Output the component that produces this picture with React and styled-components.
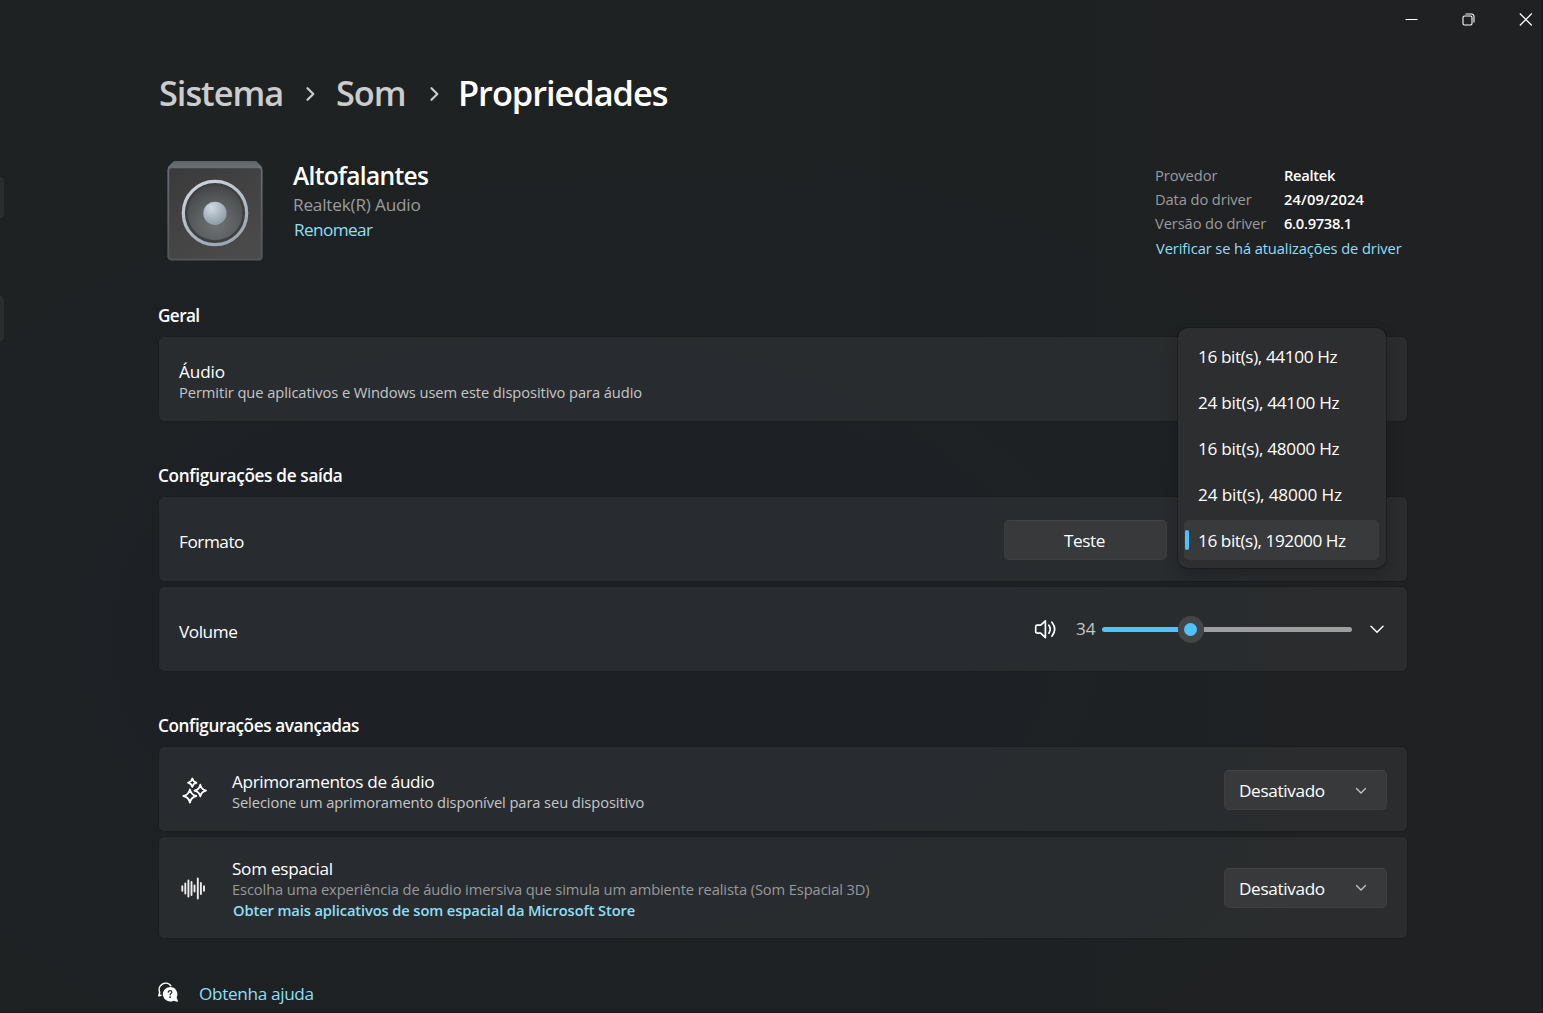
import React from 'react';
import styled, { createGlobalStyle, css } from 'styled-components';

const GlobalStyle = createGlobalStyle`
  * {
    box-sizing: border-box;
  }

  body {
    margin: 0;
    background: #1f2122;
    color: #fff;
    font-family: 'Open Sans', 'Noto Sans', sans-serif;
    overflow: hidden;
  }

  h1, h2, p, dl, dt, dd {
    margin: 0;
    font-weight: inherit;
    font-size: inherit;
  }
`;

const Window = styled.div`
  display: flex;
  width: 1543px;
  height: 1013px;
  overflow: hidden;
  background:
    radial-gradient(ellipse 900px 560px at 560px 640px, #1d2125 0%, #1d2125 45%, rgba(30, 33, 34, 0) 100%),
    linear-gradient(90deg, #1f2222 0%, #1e2122 70%, #202122 84%, #202122 100%);
  border-right: 1px solid #151617;
  border-bottom: 1px solid #151617;
`;

const Rail = styled.div`
  display: flex;
  flex-direction: column;
  gap: 78px;
  width: 4px;
  padding-top: 177px;
  flex: none;
`;

const RailItem = styled.div`
  height: ${({ $height }) => $height}px;
  border-radius: 0 5px 5px 0;
  background: #2a2d2e;
`;

const Main = styled.main`
  display: flex;
  flex-direction: column;
  flex: 1;
`;

const TitleBar = styled.header`
  display: flex;
  justify-content: flex-end;
  height: 39px;
  margin-right: -12px;
`;

const CaptionButton = styled.button`
  display: flex;
  align-items: center;
  justify-content: center;
  width: 57px;
  height: 39px;
  padding: 0;
  border: 0;
  background: none;
  color: #fff;
`;

const Content = styled.div`
  width: 1248px;
  margin-left: 155px;
`;

const Breadcrumb = styled.nav`
  display: flex;
  align-items: center;
  height: 48px;
  margin-top: 31px;
  font-size: 34.4px;
  font-weight: 600;
  line-height: 48px;
`;

const Crumb = styled.span`
  width: ${({ $width }) => $width}px;
  margin-top: -2px;
  margin-left: ${({ $current }) => ($current ? '-2px' : 0)};
  color: ${({ $current }) => ($current ? '#fff' : '#cbcccc')};
  letter-spacing: -1.05px;
  white-space: nowrap;
`;

const CrumbArrow = styled.svg`
  width: 10px;
  height: 16px;
  margin: 0 21px 0 22px;
  flex: none;
`;

const Device = styled.section`
  display: flex;
  height: 102px;
  margin-top: 42px;
`;

const DeviceArt = styled.svg`
  width: 98px;
  height: 102px;
  margin-left: 7px;
  flex: none;
`;

const DeviceText = styled.div`
  flex: 1;
  margin-left: 29px;
`;

const DeviceName = styled.h1`
  font-size: 24.5px;
  font-weight: 600;
  line-height: 32px;
  letter-spacing: -0.65px;
`;

const DeviceModel = styled.p`
  margin-top: 1px;
  color: #9b9c9d;
  font-size: 17.2px;
  line-height: 24px;
  letter-spacing: -0.2px;
`;

const Link = styled.a`
  color: #8fdff5;
  font-size: ${({ $size }) => $size || 17.2}px;
  font-weight: ${({ $strong }) => ($strong ? 600 : 400)};
  letter-spacing: ${({ $spacing }) => $spacing || 0}px;
  white-space: nowrap;
`;

const RenameRow = styled.div`
  padding-left: 1px;
  line-height: 25px;
`;

const DriverInfo = styled.div`
  width: 252px;
  padding-top: 3px;
`;

const DriverGrid = styled.dl`
  display: grid;
  grid-template-columns: 129px 1fr;
  font-size: 14.7px;
  line-height: 24px;
`;

const DriverLabel = styled.dt`
  color: #9b9c9d;
  letter-spacing: -0.1px;
`;

const DriverValue = styled.dd`
  font-weight: 600;
  letter-spacing: ${({ $spacing }) => $spacing}px;
`;

const DriverLink = styled.div`
  margin-top: 1px;
  padding-left: 1px;
  line-height: 25px;
`;

const Section = styled.section`
  margin-top: 42px;

  & + & {
    margin-top: 43px;
  }
`;

const SectionTitle = styled.h2`
  height: 33px;
  margin-left: -1px;
  font-size: 17.2px;
  font-weight: 600;
  line-height: 24px;
  letter-spacing: ${({ $spacing }) => $spacing}px;
`;

const Card = styled.div`
  display: flex;
  align-items: center;
  height: ${({ $tall }) => ($tall ? 101 : 84)}px;
  padding: ${({ $tall }) => ($tall ? 0 : '2px')} 20px 0;
  border-radius: 5px;
  background: rgba(255, 255, 255, 0.05);
  box-shadow: 0 0 0 1px rgba(0, 0, 0, 0.12);

  & + & {
    margin-top: 6px;
  }
`;

const CardIcon = styled.svg`
  width: 28px;
  height: 28px;
  margin-left: 1px;
  margin-right: 24px;
  flex: none;
`;

const CardText = styled.div`
  display: flex;
  flex-direction: column;
  flex: 1;
  padding-top: ${({ $single }) => ($single ? 2 : 4)}px;
`;

const CardTitle = styled.span`
  font-size: 17.2px;
  line-height: 21px;
  letter-spacing: ${({ $spacing }) => $spacing || 0}px;
`;

const CardHint = styled.span`
  color: ${({ $dim }) => ($dim ? '#97999a' : '#c5c6c7')};
  font-size: 14.7px;
  line-height: 21px;
  letter-spacing: ${({ $spacing }) => $spacing || 0}px;
`;

const CardLink = styled.div`
  padding-left: 1px;
  line-height: 21px;
`;

const control = css`
  height: 40px;
  border: 1px solid #3c3e3f;
  border-top-color: #424445;
  border-radius: 5px;
  background: #37393a;
  color: #fff;
  font-family: inherit;
  font-size: 17.2px;
`;

const Button = styled.button`
  ${control}
  width: 163px;
  padding: 0 2px 0 0;
  letter-spacing: -0.4px;
`;

const Select = styled.button`
  ${control}
  display: flex;
  align-items: center;
  justify-content: space-between;
  width: 163px;
  padding: 1px 19px 0 14px;
  letter-spacing: -0.35px;
`;

const FormatAnchor = styled.div`
  position: relative;
  width: 208px;
  height: 40px;
  margin-left: 12px;
`;

const FormatMenu = styled.ul`
  position: absolute;
  left: -1px;
  bottom: -8px;
  z-index: 2;
  display: flex;
  flex-direction: column;
  gap: 6px;
  width: 208px;
  height: 240px;
  margin: 0;
  padding: 8px 7px 6px 6px;
  list-style: none;
  border-radius: 10px;
  background: #2d2e2f;
  box-shadow: 0 0 0 1px rgba(0, 0, 0, 0.18), 0 8px 16px rgba(0, 0, 0, 0.22);
`;

const FormatOption = styled.li`
  display: flex;
  align-items: center;
  height: 40px;
  padding-left: 1px;
  border-radius: 5px;
  background: ${({ $selected }) => ($selected ? '#393a3b' : 'transparent')};
  font-size: 17.2px;
  letter-spacing: ${({ $spacing }) => $spacing}px;
  white-space: nowrap;

  &::before {
    content: '';
    width: 4px;
    height: 20px;
    margin-right: 9px;
    border-radius: 2px;
    background: ${({ $selected }) => ($selected ? '#4cc2ff' : 'transparent')};
  }
`;

const VolumeControl = styled.div`
  display: flex;
  align-items: center;
  padding-bottom: 2px;
`;

const VolumeIcon = styled.svg`
  width: 24px;
  height: 24px;
`;

const VolumeValue = styled.span`
  width: 26px;
  margin-left: 19px;
  color: #c5c6c7;
  font-size: 17.2px;
  line-height: 24px;
`;

const Track = styled.div`
  display: flex;
  align-items: center;
  width: 250px;
  height: 27px;
`;

const TrackBar = styled.div`
  flex: ${({ $filled }) => ($filled ? '0 0 76px' : '1')};
  height: 5px;
  border-radius: ${({ $filled }) => ($filled ? '3px 0 0 3px' : '0 3px 3px 0')};
  background: ${({ $filled }) => ($filled ? '#4cc2ff' : '#9e9f9f')};
`;

const Thumb = styled.div`
  display: flex;
  align-items: center;
  justify-content: center;
  width: 26px;
  height: 27px;
  padding-right: 1px;
  border-radius: 50%;
  background: #454545;

  &::before {
    content: '';
    width: 13px;
    height: 13px;
    border-radius: 50%;
    background: #4cc2ff;
  }
`;

const Expander = styled.svg`
  width: 16px;
  height: 10px;
  margin: 0 2px 0 17px;
`;

const Help = styled.footer`
  display: flex;
  align-items: center;
  gap: 18px;
  height: 30px;
  margin-top: 40px;
  margin-left: -2px;
`;

const ChevronDown = () => (
  <svg width="12" height="8" viewBox="0 0 12 8" fill="none">
    <path d="M1.500 1.500 6 6l4.500-4.500" stroke="#c4c5c5" strokeWidth="1.300" strokeLinecap="round" />
  </svg>
);

const CrumbSeparator = () => (
  <CrumbArrow viewBox="0 0 10 16" fill="none">
    <path d="M2.500 2.200l5.800 5.800-5.800 5.800" stroke="#cbcccc" strokeWidth="2.200" strokeLinecap="round" strokeLinejoin="round" />
  </CrumbArrow>
);

const SpeakerArt = () => (
  <DeviceArt viewBox="0 0 98 102">
    <defs>
      <linearGradient id="face" x1="0" y1="0" x2="0.600" y2="1">
        <stop offset="0" stopColor="#3a3a3a" />
        <stop offset="1" stopColor="#4a4a4a" />
      </linearGradient>
      <linearGradient id="lid" x1="0" y1="0" x2="0" y2="1">
        <stop offset="0" stopColor="#5c6268" />
        <stop offset="0.600" stopColor="#6b7279" />
        <stop offset="1" stopColor="#50565b" />
      </linearGradient>
      <linearGradient id="edge" x1="0" y1="0" x2="0" y2="1">
        <stop offset="0" stopColor="#656c73" />
        <stop offset="1" stopColor="#54585c" />
      </linearGradient>
      <linearGradient id="ring" x1="0.200" y1="0" x2="0.700" y2="1">
        <stop offset="0" stopColor="#cdd6de" />
        <stop offset="1" stopColor="#9aa5b1" />
      </linearGradient>
      <radialGradient id="cone" cx="0.520" cy="0.700" r="0.700">
        <stop offset="0" stopColor="#6e7275" />
        <stop offset="0.500" stopColor="#5d6062" />
        <stop offset="1" stopColor="#444546" />
      </radialGradient>
      <radialGradient id="dome" cx="0.350" cy="0.250" r="0.850">
        <stop offset="0" stopColor="#cfd9e2" />
        <stop offset="1" stopColor="#8795a3" />
      </radialGradient>
    </defs>
    <path d="M2 7 7 1.700Q8 1 9 1h80q1 0 2 .700L96 7v5H2z" fill="url(#lid)" />
    <rect x="2.300" y="7.300" width="93.400" height="92.300" rx="3" fill="url(#face)" stroke="url(#edge)" strokeWidth="1.800" />
    <circle cx="49" cy="53" r="30" fill="#3d4043" />
    <circle cx="49" cy="53" r="31.700" fill="none" stroke="url(#ring)" strokeWidth="3.200" />
    <circle cx="49" cy="52.700" r="27.500" fill="url(#cone)" />
    <circle cx="49" cy="53.300" r="11.600" fill="url(#dome)" />
  </DeviceArt>
);

const SparkleIcon = () => (
  <CardIcon viewBox="0 0 28 28" fill="none" stroke="#fff" strokeWidth="1.800" strokeLinejoin="round">
    <path d="M12.300 2.500 13.700 5.300 16.500 6.700 13.700 8.100 12.300 10.900 10.900 8.100 8.100 6.700 10.900 5.300z" />
    <path d="M20.300 8.700Q21.200 13.600 26 14.600 21.200 15.600 20.300 20.400 19.300 15.600 14.500 14.600 19.300 13.600 20.300 8.700z" />
    <path d="M9.900 13.400Q11 18.900 16.300 20 11 21.100 9.900 26.600 8.800 21.100 3.400 20 8.800 18.900 9.900 13.400z" />
  </CardIcon>
);

const WaveIcon = () => (
  <CardIcon viewBox="0 0 28 28" stroke="#ececec" strokeWidth="1.900" strokeLinecap="round">
    <path d="M2.300 12.200v4.500M5.300 9.500v10M8.400 6.500v16M11.500 8v13M14.500 11.500v6M17.800 4.500v20M20.900 9v11M24 12.200v4.500" />
  </CardIcon>
);

const HelpIcon = () => (
  <svg width="24" height="24" viewBox="0 0 24 24">
    <path
      d="M4 14.200 1.800 14.700 2.700 11.400A6.500 6.500 0 0 1 13.800 4.800"
      fill="none"
      stroke="#fff"
      strokeWidth="1.500"
      strokeLinecap="round"
      strokeLinejoin="round"
    />
    <path d="M13.100 5.900a7.300 7.300 0 0 1 6.500 10.600l1.300 3.500q.300 1-.700.800l-3.700-1.100A7.300 7.300 0 1 1 13.100 5.900z" fill="#fff" />
    <path
      d="M11.300 11.100q.200-1.500 1.800-1.500 1.700 0 1.700 1.500 0 .900-.900 1.500-.800.500-.800 1.300"
      fill="none"
      stroke="#1e2225"
      strokeWidth="1.200"
      strokeLinecap="round"
    />
    <circle cx="13.100" cy="16.200" r="0.850" fill="#1e2225" />
  </svg>
);

const formats = [
  { label: '16 bit(s), 44100 Hz', spacing: -0.4 },
  { label: '24 bit(s), 44100 Hz', spacing: -0.28 },
  { label: '16 bit(s), 48000 Hz', spacing: -0.28 },
  { label: '24 bit(s), 48000 Hz', spacing: -0.15 },
  { label: '16 bit(s), 192000 Hz', spacing: -0.44 }
];

const App = () => (
  <>
    <GlobalStyle />
    <Window>
      <Rail>
        <RailItem $height={41} />
        <RailItem $height={45} />
      </Rail>

      <Main>
        <TitleBar>
          <CaptionButton aria-label="Minimizar">
            <svg width="13" height="13" viewBox="0 0 13 13">
              <path d="M.5 6.500h12" stroke="#fff" />
            </svg>
          </CaptionButton>
          <CaptionButton aria-label="Restaurar">
            <svg width="13" height="13" viewBox="0 0 13 13" fill="none" stroke="#fff" strokeWidth="1.100">
              <rect x="1" y="3" width="9" height="9" rx="1.500" />
              <path d="M3.500 1h6a2.500 2.500 0 0 1 2.500 2.500v6" />
            </svg>
          </CaptionButton>
          <CaptionButton aria-label="Fechar">
            <svg width="13" height="13" viewBox="0 0 13 13">
              <path d="M.8.5l12 12M12.800.5l-12 12" stroke="#fff" strokeWidth="1.200" />
            </svg>
          </CaptionButton>
        </TitleBar>

        <Content>
          <Breadcrumb>
            <Crumb $width={124}>Sistema</Crumb>
            <CrumbSeparator />
            <Crumb $width={71}>Som</Crumb>
            <CrumbSeparator />
            <Crumb $width={215} $current>Propriedades</Crumb>
          </Breadcrumb>

          <Device>
            <SpeakerArt />
            <DeviceText>
              <DeviceName>Altofalantes</DeviceName>
              <DeviceModel>Realtek(R) Audio</DeviceModel>
              <RenameRow>
                <Link $spacing={-0.62}>Renomear</Link>
              </RenameRow>
            </DeviceText>
            <DriverInfo>
              <DriverGrid>
                <DriverLabel>Provedor</DriverLabel>
                <DriverValue $spacing={-0.3}>Realtek</DriverValue>
                <DriverLabel>Data do driver</DriverLabel>
                <DriverValue $spacing={0.15}>24/09/2024</DriverValue>
                <DriverLabel>Versão do driver</DriverLabel>
                <DriverValue $spacing={-0.3}>6.0.9738.1</DriverValue>
              </DriverGrid>
              <DriverLink>
                <Link $size={14.7} $spacing={-0.11}>Verificar se há atualizações de driver</Link>
              </DriverLink>
            </DriverInfo>
          </Device>

          <Section>
            <SectionTitle $spacing={-0.6}>Geral</SectionTitle>
            <Card>
              <CardText>
                <CardTitle $spacing={-0.1}>Áudio</CardTitle>
                <CardHint $spacing={-0.08}>Permitir que aplicativos e Windows usem este dispositivo para áudio</CardHint>
              </CardText>
            </Card>
          </Section>

          <Section>
            <SectionTitle $spacing={-0.33}>Configurações de saída</SectionTitle>
            <Card>
              <CardText $single>
                <CardTitle $spacing={-0.45}>Formato</CardTitle>
              </CardText>
              <Button>Teste</Button>
              <FormatAnchor>
                <FormatMenu>
                  {formats.map((format, index) => (
                    <FormatOption
                      key={format.label}
                      $spacing={format.spacing}
                      $selected={index === formats.length - 1}
                    >
                      {format.label}
                    </FormatOption>
                  ))}
                </FormatMenu>
              </FormatAnchor>
            </Card>
            <Card>
              <CardText $single>
                <CardTitle $spacing={-0.45}>Volume</CardTitle>
              </CardText>
              <VolumeControl>
                <VolumeIcon viewBox="0 0 24 24" fill="none" stroke="#fff" strokeWidth="1.700" strokeLinecap="round" strokeLinejoin="round">
                  <path d="M12.400 3.800v16.800L7.700 16.200H4.200a1.500 1.500 0 0 1-1.500-1.500v-5a1.500 1.500 0 0 1 1.500-1.500h3.500z" />
                  <path d="M15.900 8.200q2.600 4 0 8M18.900 5.200q5.600 7 0 14" />
                </VolumeIcon>
                <VolumeValue>34</VolumeValue>
                <Track>
                  <TrackBar $filled />
                  <Thumb />
                  <TrackBar />
                </Track>
                <Expander viewBox="0 0 16 10" fill="none">
                  <path d="M2 2.300l6 6 6-6" stroke="#fff" strokeWidth="1.500" strokeLinecap="round" />
                </Expander>
              </VolumeControl>
            </Card>
          </Section>

          <Section>
            <SectionTitle $spacing={-0.41}>Configurações avançadas</SectionTitle>
            <Card>
              <SparkleIcon />
              <CardText>
                <CardTitle $spacing={-0.37}>Aprimoramentos de áudio</CardTitle>
                <CardHint $spacing={-0.09}>Selecione um aprimoramento disponível para seu dispositivo</CardHint>
              </CardText>
              <Select>
                Desativado
                <ChevronDown />
              </Select>
            </Card>
            <Card $tall>
              <WaveIcon />
              <CardText>
                <CardTitle $spacing={-0.3}>Som espacial</CardTitle>
                <CardHint $dim $spacing={-0.11}>
                  Escolha uma experiência de áudio imersiva que simula um ambiente realista (Som Espacial 3D)
                </CardHint>
                <CardLink>
                  <Link $size={14.7} $spacing={-0.12} $strong>Obter mais aplicativos de som espacial da Microsoft Store</Link>
                </CardLink>
              </CardText>
              <Select>
                Desativado
                <ChevronDown />
              </Select>
            </Card>
          </Section>

          <Help>
            <HelpIcon />
            <Link $spacing={-0.35}>Obtenha ajuda</Link>
          </Help>
        </Content>
      </Main>
    </Window>
  </>
);

export default App;
